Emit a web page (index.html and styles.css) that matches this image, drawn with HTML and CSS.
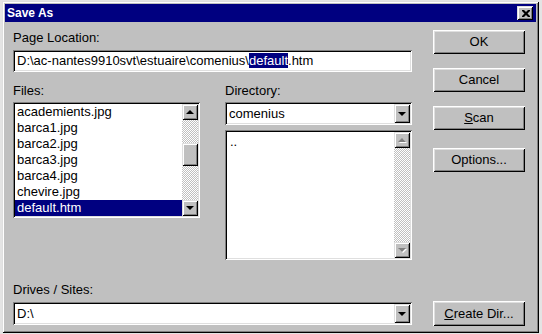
FILE: index.html
```html
<!DOCTYPE html>
<html lang="en">
<head>
  <meta charset="UTF-8">
  <title>Save As</title>
  <link rel="stylesheet" href="styles.css">
</head>
<body>

<div class="dialog">
  <div class="titlebar">
    <span class="title">Save As</span>
    <div class="close raised">
      <svg width="8" height="7" viewBox="0 0 8 7">
        <path d="M0 0h2l2 2 2-2h2v1l-2.5 2.5L8 6v1H6L4 5 2 7H0V6l2.5-2.5L0 1z" fill="#000"/>
      </svg>
    </div>
  </div>

  <div class="content">
    <div class="main">
      <div class="label">Page Location:</div>
      <div class="field location">D:\ac-nantes9910svt\estuaire\comenius\<span class="sel">default</span>.htm</div>

      <div class="columns">
        <div class="col">
          <div class="label">Files:</div>
          <div class="listbox files">
            <ul class="items">
              <li>academients.jpg</li>
              <li>barca1.jpg</li>
              <li>barca2.jpg</li>
              <li>barca3.jpg</li>
              <li>barca4.jpg</li>
              <li>chevire.jpg</li>
              <li class="selected">default.htm</li>
            </ul>
            <div class="scrollbar">
              <div class="sbtn raised"><i class="arrow up"></i></div>
              <div class="track"><div class="thumb raised"></div></div>
              <div class="sbtn raised"><i class="arrow down"></i></div>
            </div>
          </div>
        </div>

        <div class="col">
          <div class="label">Directory:</div>
          <div class="combo dir-combo">
            <span class="value">comenius</span>
            <div class="drop raised"><i class="arrow down"></i></div>
          </div>
          <div class="listbox dirs">
            <ul class="items">
              <li>..</li>
            </ul>
            <div class="scrollbar">
              <div class="sbtn raised"><i class="arrow up disabled"></i></div>
              <div class="track"></div>
              <div class="sbtn raised"><i class="arrow down disabled"></i></div>
            </div>
          </div>
        </div>
      </div>

      <div class="label drives-label">Drives / Sites:</div>
      <div class="combo">
        <span class="value">D:\</span>
        <div class="drop raised"><i class="arrow down"></i></div>
      </div>
    </div>

    <div class="buttons">
      <div class="btn">OK</div>
      <div class="btn">Cancel</div>
      <div class="btn"><u>S</u>can</div>
      <div class="btn options">Options...</div>
      <div class="btn create"><u>C</u>reate Dir...</div>
    </div>
  </div>
</div>

</body>
</html>
```

FILE: styles.css
```css
* {
  box-sizing: border-box;
}
html {
  background: #e4e4e4;
}
body {
  margin: 0;
  padding: 1px 0 0 2px;
  font-family: 'Liberation Sans', Arial, sans-serif;
  font-size: 13px;
  color: #000;
}
.dialog {
  width: 537px;
  height: 332px;
  padding: 3px;
  background: #c0c0c0;
  box-shadow: inset 1px 1px #dfdfdf, inset -1px -1px #000,
              inset 2px 2px #fff, inset -2px -2px #808080;
}
.raised {
  background: #c0c0c0;
  box-shadow: inset 1px 1px #dfdfdf, inset -1px -1px #000,
              inset 2px 2px #fff, inset -2px -2px #808080;
}
.titlebar {
  height: 18px;
  background: #000080;
  display: flex;
  align-items: center;
  justify-content: space-between;
  padding: 0 3px 0 2px;
}
.title {
  color: #fff;
  font-weight: bold;
  font-size: 12px;
}
.close {
  width: 16px;
  height: 14px;
  display: flex;
  align-items: center;
  justify-content: center;
  padding-left: 1px;
}
.content {
  display: flex;
  padding: 8px 0 0 8px;
}
.main {
  width: 399px;
}
.label {
  height: 15px;
  line-height: 15px;
}
.field, .combo, .listbox {
  background: #fff;
  box-shadow: inset 1px 1px #808080, inset -1px -1px #fff,
              inset 2px 2px #000, inset -2px -2px #dfdfdf;
}
.location {
  margin-top: 5px;
  height: 22px;
  line-height: 18px;
  padding: 2px 4px;
  white-space: nowrap;
}
.sel {
  background: #000080;
  color: #fff;
}
.columns {
  display: flex;
  gap: 25px;
  margin-top: 11px;
}
.col {
  width: 187px;
}
.listbox {
  display: flex;
  padding: 2px;
}
.files {
  margin-top: 4px;
  height: 116px;
}
.dirs {
  margin-top: 5px;
  height: 130px;
}
.items {
  flex: 1;
  list-style: none;
  margin: 0;
  padding: 0;
}
.items li {
  height: 16px;
  line-height: 16px;
  padding-left: 2px;
}
.items li.selected {
  background: #000080;
  color: #fff;
}
.dirs .items li {
  padding-left: 3px;
  margin-top: 2px;
}
.scrollbar {
  width: 16px;
  display: flex;
  flex-direction: column;
}
.sbtn {
  height: 16px;
  display: flex;
  align-items: center;
  justify-content: center;
}
.track {
  flex: 1;
  background-image: repeating-conic-gradient(#c0c0c0 0% 25%, #fff 0% 50%);
  background-size: 2px 2px;
}
.thumb {
  margin-top: 23px;
  height: 23px;
}
.arrow {
  width: 0;
  height: 0;
  border-left: 4px solid transparent;
  border-right: 4px solid transparent;
}
.arrow.up {
  border-bottom: 4px solid #000;
}
.arrow.down {
  border-top: 4px solid #000;
}
.arrow.disabled.up {
  border-bottom-color: #808080;
  filter: drop-shadow(1px 1px 0 #fff);
}
.arrow.disabled.down {
  border-top-color: #808080;
  filter: drop-shadow(1px 1px 0 #fff);
}
.combo {
  height: 23px;
  display: flex;
  align-items: center;
  padding: 2px;
}
.combo .value {
  flex: 1;
  padding-left: 2px;
}
.drop {
  width: 16px;
  height: 19px;
  display: flex;
  align-items: center;
  justify-content: center;
}
.dir-combo {
  margin-top: 4px;
}
.drives-label {
  margin-top: 22px;
}
.drives-label + .combo {
  margin-top: 5px;
}
.buttons {
  width: 92px;
  margin-left: 21px;
  display: flex;
  flex-direction: column;
}
.btn {
  height: 24px;
  line-height: 24px;
  text-align: center;
  background: #c0c0c0;
  box-shadow: inset 1px 1px #fff, inset -1px -1px #000,
              inset 2px 2px #dfdfdf, inset -2px -2px #808080;
}
.btn + .btn {
  margin-top: 14px;
}
.btn.options {
  margin-top: 18px;
}
.btn.create {
  margin-top: 129px;
  height: 25px;
  line-height: 25px;
}
```
